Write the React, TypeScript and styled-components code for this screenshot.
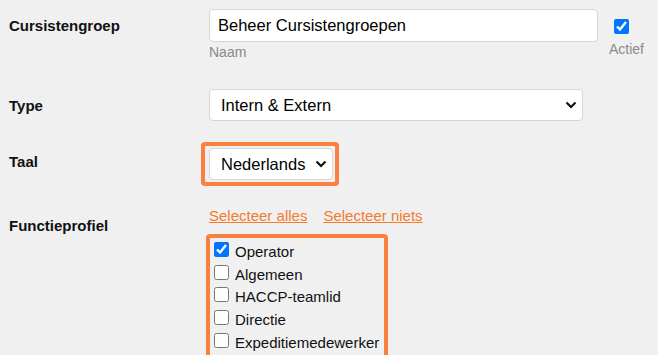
import React from 'react';
import styled, { createGlobalStyle } from 'styled-components';

const Global = createGlobalStyle`
  html, body {
    margin: 0;
    padding: 0;
    background: #f0f0f0;
    font-family: "Liberation Sans", Arial, sans-serif;
  }
`

const Form = styled.div`
  padding: 9px 0 0 9px;
`
const Row = styled.div<{ $height?: number }>`
  display: grid;
  grid-template-columns: 200px 1fr;
  align-items: start;
  height: ${p => (p.$height ? p.$height + 'px' : 'auto')};
`
const Label = styled.div<{ $top: number }>`
  margin-top: ${p => p.$top}px;
  font-size: 15px;
  font-weight: 700;
  color: #111;
`
const Line = styled.div`
  display: flex;
  align-items: flex-start;
`
const Field = styled.div`
  display: flex;
  flex-direction: column;
  width: 389px;
`
const TextInput = styled.input`
  box-sizing: border-box;
  height: 33px;
  width: 100%;
  padding: 0 8px;
  border: 1px solid #d6d6d6;
  border-radius: 4px;
  background: #fff;
  font-family: inherit;
  font-size: 16.5px;
  color: #000;
  outline: none;
`
const Hint = styled.div`
  margin-top: 2px;
  font-size: 14px;
  color: #8a8a8a;
`
const ActiveCol = styled.div`
  margin-left: 11px;
  padding-top: 10px;
  display: flex;
  flex-direction: column;
  align-items: flex-start;
`
const Check = styled.input`
  width: 15px;
  height: 15px;
  margin: 0;
  flex-shrink: 0;
  accent-color: #0075ff;
`
const ActiveCheck = styled(Check)`
  margin-left: 5px;
`
const ActiveText = styled(Hint)`
  margin-top: 7px;
`
const SelectWrap = styled.div<{ $width: number }>`
  position: relative;
  width: ${p => p.$width}px;
  height: 32px;
`
const Select = styled.select`
  box-sizing: border-box;
  width: 100%;
  height: 100%;
  appearance: none;
  padding: 0 18px 0 11px;
  border: 1px solid #d6d6d6;
  border-radius: 4px;
  background: #fff;
  font-family: inherit;
  font-size: 16.5px;
  color: #000;
  outline: none;
`
const Chevron = styled.svg`
  position: absolute;
  right: 6px;
  top: 12px;
  pointer-events: none;
`
const Highlight = styled.div`
  display: inline-flex;
  flex-direction: column;
  border: 4px solid #fa8040;
  border-radius: 4px;
`
const TaalBox = styled(Highlight)`
  margin-left: -8px;
  padding: 2px 2px 2px 4px;
`
const Links = styled.div`
  margin-top: 7px;
  display: flex;
  gap: 16px;
`
const Link = styled.a`
  font-size: 15px;
  color: #f47a2c;
  text-decoration: underline;
  cursor: pointer;
`
const ProfileBox = styled(Highlight)`
  margin-top: 10px;
  margin-left: -3px;
  padding: 4px 5px 4px 4px;
`
const Option = styled.label`
  display: flex;
  align-items: flex-start;
  height: 22.7px;
  gap: 6px;
  font-size: 15px;
  color: #111;
  line-height: 19px;
`

function Dropdown({ width, value, options }: { width: number; value: string; options: string[] }) {
  return (
    <SelectWrap $width={width}>
      <Select defaultValue={value}>
        {options.map(o => (
          <option key={o}>{o}</option>
        ))}
      </Select>
      <Chevron width="12" height="8" viewBox="0 0 12 8">
        <polyline points="1.5,1.5 6,6 10.5,1.5" fill="none" stroke="#111" strokeWidth="2.2" />
      </Chevron>
    </SelectWrap>
  )
}

const profiles = [
  { name: 'Operator', checked: true },
  { name: 'Algemeen', checked: false },
  { name: 'HACCP-teamlid', checked: false },
  { name: 'Directie', checked: false },
  { name: 'Expeditiemedewerker', checked: false },
]

export default function App() {
  return (
    <>
      <Global />
      <Form>
        <Row $height={80}>
          <Label $top={8}>Cursistengroep</Label>
          <Line>
            <Field>
              <TextInput defaultValue="Beheer Cursistengroepen" />
              <Hint>Naam</Hint>
            </Field>
            <ActiveCol>
              <ActiveCheck type="checkbox" defaultChecked />
              <ActiveText>Actief</ActiveText>
            </ActiveCol>
          </Line>
        </Row>
        <Row $height={53}>
          <Label $top={8}>Type</Label>
          <Dropdown width={374} value="Intern & Extern" options={['Intern & Extern', 'Intern', 'Extern']} />
        </Row>
        <Row $height={58}>
          <Label $top={11}>Taal</Label>
          <div>
            <TaalBox>
              <Dropdown width={124} value="Nederlands" options={['Nederlands', 'English', 'Deutsch']} />
            </TaalBox>
          </div>
        </Row>
        <Row>
          <Label $top={17}>Functieprofiel</Label>
          <div>
            <Links>
              <Link>Selecteer alles</Link>
              <Link>Selecteer niets</Link>
            </Links>
            <ProfileBox>
              {profiles.map(p => (
                <Option key={p.name}>
                  <Check type="checkbox" defaultChecked={p.checked} />
                  {p.name}
                </Option>
              ))}
            </ProfileBox>
          </div>
        </Row>
      </Form>
    </>
  )
}
